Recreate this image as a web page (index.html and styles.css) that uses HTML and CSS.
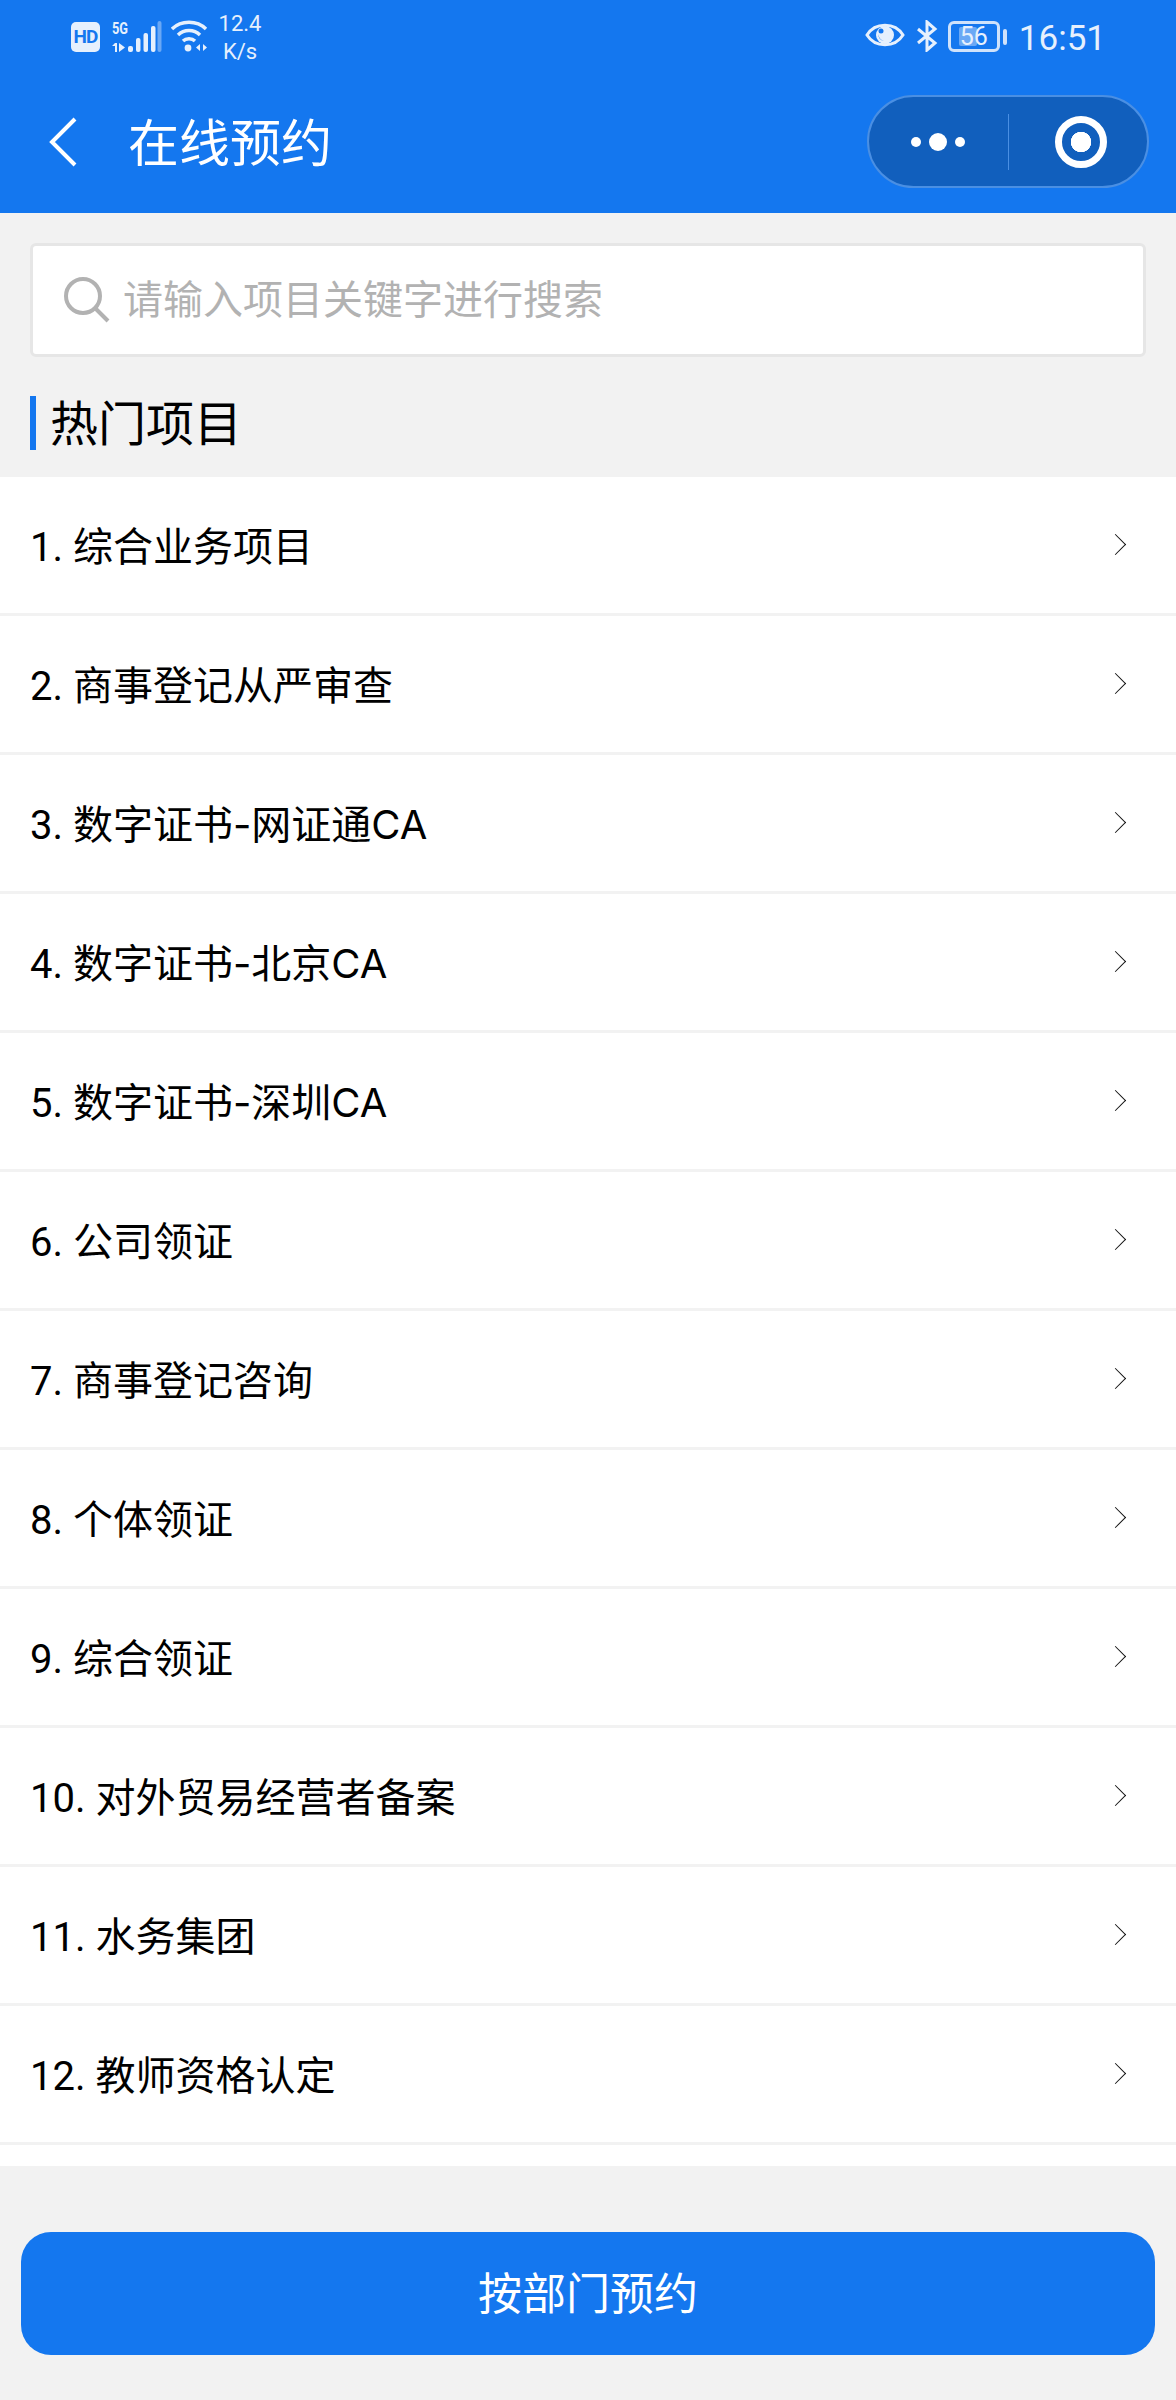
FILE: index.html
```html
<!DOCTYPE html>
<html lang="zh-CN">
<head>
    <meta charset="UTF-8">
    <meta name="viewport" content="width=device-width, initial-scale=1.0">
    <title>在线预约</title>
    <link rel="stylesheet" href="styles.css">
</head>
<body>
    <header class="header">
        <!-- 状态栏 -->
        <div class="status-bar">
            <div class="status-left">
                <span class="hd">HD</span>
                <div class="signal">
                    <span class="five-g">5G</span>
                    <svg width="50" height="32" viewBox="0 0 50 32">
                        <g fill="#e6f0fd">
                            <path d="M0 25l3-3h2v9h-2v-6z"/>
                            <path d="M7 22l6 4.500-6 4.500z"/>
                            <rect x="16" y="25" width="5" height="6" rx="2"/>
                            <rect x="24" y="17" width="4.500" height="14" rx="2"/>
                            <rect x="31.500" y="12" width="4.500" height="19" rx="2"/>
                            <rect x="39" y="5" width="4.500" height="26" rx="2"/>
                        </g>
                        <rect x="45.500" y="0" width="4" height="31" rx="2" fill="#6aa8f5"/>
                    </svg>
                </div>
                <svg class="wifi" width="38" height="32" viewBox="0 0 38 32">
                    <g fill="none" stroke="#e6f0fd" stroke-width="3.4">
                        <path d="M1 9C10 0 26 0 35 9"/>
                        <path d="M7 15C13 9 23 9 29 15"/>
                        <path d="M12 21C15 18 21 18 24 21"/>
                    </g>
                    <circle cx="17" cy="28" r="3.400" fill="#e6f0fd"/>
                    <path d="M29 24v7l-4-3.500zM32 24v7l4-3.500z" fill="#e6f0fd"/>
                </svg>
                <div class="speed">
                    <span>12.4</span>
                    <span>K/s</span>
                </div>
            </div>
            <div class="status-right">
                <svg class="eye" width="40" height="28" viewBox="0 0 40 28">
                    <path d="M2 14C10 1 30 1 38 14C30 27 10 27 2 14z" fill="none" stroke="#e6f0fd" stroke-width="3"/>
                    <circle cx="20" cy="14" r="9" fill="#e6f0fd"/>
                    <path d="M13 13a7 7 0 0 0 6 7a9 9 0 0 1-6-7z" fill="#1477ef"/>
                    <circle cx="16" cy="10" r="2.500" fill="#1477ef"/>
                </svg>
                <svg class="bluetooth" width="22" height="32" viewBox="0 0 22 32">
                    <path d="M2 9L19 23L11 30V2L19 9L2 23" fill="none" stroke="#e6f0fd" stroke-width="3"/>
                </svg>
                <div class="battery">
                    <div class="battery-body">
                        <span class="battery-fill"></span>
                        <span class="battery-num">56</span>
                    </div>
                    <span class="battery-nub"></span>
                </div>
                <span class="time">16:51</span>
            </div>
        </div>
        <!-- 导航栏 -->
        <div class="nav-bar">
            <svg class="back" width="28" height="50" viewBox="0 0 28 50">
                <path d="M26 2L3 25L26 48" fill="none" stroke="#fff" stroke-width="4"/>
            </svg>
            <h1 class="nav-title">在线预约</h1>
            <div class="capsule">
                <div class="capsule-more">
                    <span class="dot"></span>
                    <span class="dot dot-big"></span>
                    <span class="dot"></span>
                </div>
                <span class="capsule-line"></span>
                <div class="capsule-close">
                    <span class="ring"></span>
                </div>
            </div>
        </div>
    </header>

    <main class="content">
        <div class="search-box">
            <svg width="46" height="46" viewBox="0 0 46 46">
                <circle cx="19" cy="19" r="17" fill="none" stroke="#b2b2b2" stroke-width="4"/>
                <path d="M31 31L44 44" fill="none" stroke="#b2b2b2" stroke-width="4"/>
            </svg>
            <span class="search-text">请输入项目关键字进行搜索</span>
        </div>

        <h2 class="section-title">热门项目</h2>

        <ul class="list">
            <li class="list-item"><p class="item-name"><span class="num">1. </span>综合业务项目</p><i class="arrow"></i></li>
            <li class="list-item"><p class="item-name"><span class="num">2. </span>商事登记从严审查</p><i class="arrow"></i></li>
            <li class="list-item"><p class="item-name"><span class="num">3. </span>数字证书-网证通CA</p><i class="arrow"></i></li>
            <li class="list-item"><p class="item-name"><span class="num">4. </span>数字证书-北京CA</p><i class="arrow"></i></li>
            <li class="list-item"><p class="item-name"><span class="num">5. </span>数字证书-深圳CA</p><i class="arrow"></i></li>
            <li class="list-item"><p class="item-name"><span class="num">6. </span>公司领证</p><i class="arrow"></i></li>
            <li class="list-item"><p class="item-name"><span class="num">7. </span>商事登记咨询</p><i class="arrow"></i></li>
            <li class="list-item"><p class="item-name"><span class="num">8. </span>个体领证</p><i class="arrow"></i></li>
            <li class="list-item"><p class="item-name"><span class="num">9. </span>综合领证</p><i class="arrow"></i></li>
            <li class="list-item"><p class="item-name"><span class="num">10. </span>对外贸易经营者备案</p><i class="arrow"></i></li>
            <li class="list-item"><p class="item-name"><span class="num">11. </span>水务集团</p><i class="arrow"></i></li>
            <li class="list-item"><p class="item-name"><span class="num">12. </span>教师资格认定</p><i class="arrow"></i></li>
        </ul>

        <div class="footer">
            <button type="button" class="dept-btn">按部门预约</button>
        </div>
    </main>
</body>
</html>
```

FILE: styles.css
```css
* {
    box-sizing: border-box;
}
body {
    margin: 0;
    height: 2400px;
    background-color: #f2f2f2;
    font-family: Inter, "Noto Sans CJK SC", sans-serif;
    color: #000;
}
.header {
    height: 213px;
    background-color: #1477ef;
    color: #fff;
}
.status-bar {
    height: 75px;
    padding: 13px 70px 0 71px;
    display: flex;
    justify-content: space-between;
    color: #e6f0fd;
    font-family: Roboto, sans-serif;
}
.status-left, .status-right {
    display: flex;
    align-items: flex-start;
}
.hd {
    width: 29px;
    height: 30px;
    margin-top: 9px;
    border-radius: 5px;
    background-color: #e6f0fd;
    color: #1477ef;
    font-size: 19px;
    font-weight: 700;
    line-height: 30px;
    text-align: center;
    letter-spacing: -1px;
}
.signal {
    position: relative;
    width: 50px;
    margin: 8px 0 0 12px;
}
.signal svg {
    display: block;
}
.five-g {
    position: absolute;
    left: 0;
    top: 0;
    font-size: 17px;
    font-weight: 700;
    line-height: 15px;
    transform: scaleX(0.75);
    transform-origin: left;
}
.wifi {
    margin: 7px 0 0 9px;
}
.speed {
    display: flex;
    flex-direction: column;
    align-items: center;
    width: 44px;
    margin: -3px 0 0 9px;
    font-size: 22px;
    line-height: 28px;
}
.status-right {
    padding-top: 7px;
}
.eye {
    margin-top: 1px;
}
.bluetooth {
    margin-left: 11px;
}
.battery {
    display: flex;
    align-items: center;
    margin: 1px 0 0 10px;
}
.battery-body {
    position: relative;
    width: 52px;
    height: 31px;
    border: 3px solid #cfe2fb;
    border-radius: 6px;
    overflow: hidden;
}
.battery-fill {
    position: absolute;
    left: 8px;
    top: 3px;
    bottom: 3px;
    width: 18px;
    border-radius: 2px;
    background-color: #6aa8f5;
}
.battery-num {
    position: absolute;
    left: 0;
    right: 0;
    top: 0;
    font-size: 25px;
    line-height: 25px;
    text-align: center;
}
.battery-nub {
    width: 4px;
    height: 16px;
    margin-left: 3px;
    border-radius: 2px;
    background-color: #cfe2fb;
}
.time {
    margin: -1px 0 0 12px;
    font-size: 35px;
    line-height: 40px;
}
.nav-bar {
    display: flex;
    align-items: center;
    height: 138px;
    padding: 0 27px 0 49px;
}
.back {
    flex-shrink: 0;
    margin-bottom: 4px;
}
.nav-title {
    margin: 0 0 0 51px;
    flex: 1;
    font-size: 51px;
    font-weight: 400;
    line-height: 60px;
}
.capsule {
    display: flex;
    align-items: center;
    width: 282px;
    height: 93px;
    margin-bottom: 5px;
    border: 2px solid #4a8fe3;
    border-radius: 47px;
    background-color: #115fbd;
}
.capsule-more {
    display: flex;
    align-items: center;
    justify-content: center;
    gap: 8px;
    width: 139px;
    padding-right: 2px;
}
.dot {
    width: 10px;
    height: 10px;
    border-radius: 50%;
    background-color: #fff;
}
.dot-big {
    width: 18px;
    height: 18px;
}
.capsule-line {
    width: 1px;
    height: 56px;
    background-color: #4a8fe3;
}
.capsule-close {
    flex: 1;
    display: flex;
    justify-content: center;
    padding-left: 5px;
}
.ring {
    width: 52px;
    height: 52px;
    border: 7px solid #fff;
    border-radius: 50%;
    background: radial-gradient(circle, #fff 0 10px, transparent 10.500px);
}
.content {
    display: flex;
    flex-direction: column;
}
.search-box {
    display: flex;
    align-items: center;
    height: 114px;
    margin: 30px 30px 0;
    padding: 0 0 0 31px;
    background-color: #fff;
    border: 3px solid #e6e6e6;
    border-radius: 6px;
}
.search-text {
    margin-left: 13px;
    padding-bottom: 6px;
    font-size: 40px;
    color: #b2b2b2;
}
.section-title {
    height: 54px;
    margin: 39px 0 27px 30px;
    padding-left: 14px;
    border-left: 6px solid #1477ef;
    font-size: 48px;
    font-weight: 400;
    line-height: 56px;
}
.list {
    margin: 0;
    padding: 0 0 21px;
    list-style: none;
    background-color: #fff;
}
.list-item {
    display: flex;
    align-items: center;
    justify-content: space-between;
    height: 139px;
    padding: 0 53px 0 30px;
    border-bottom: 3px solid #f2f2f2;
    font-size: 40px;
}
.item-name {
    margin: 0 0 3px;
}
.num {
    font-family: Roboto, sans-serif;
}
.arrow {
    width: 15px;
    height: 15px;
    margin-bottom: 2px;
    border-top: 1.5px solid #111;
    border-right: 1.5px solid #111;
    transform: rotate(45deg);
}
.footer {
    padding: 66px 21px 0;
}
.dept-btn {
    display: block;
    width: 100%;
    height: 123px;
    padding: 0 0 5px;
    border: none;
    border-radius: 30px;
    background-color: #1477ef;
    color: #fff;
    font-family: inherit;
    font-size: 44px;
}
```
